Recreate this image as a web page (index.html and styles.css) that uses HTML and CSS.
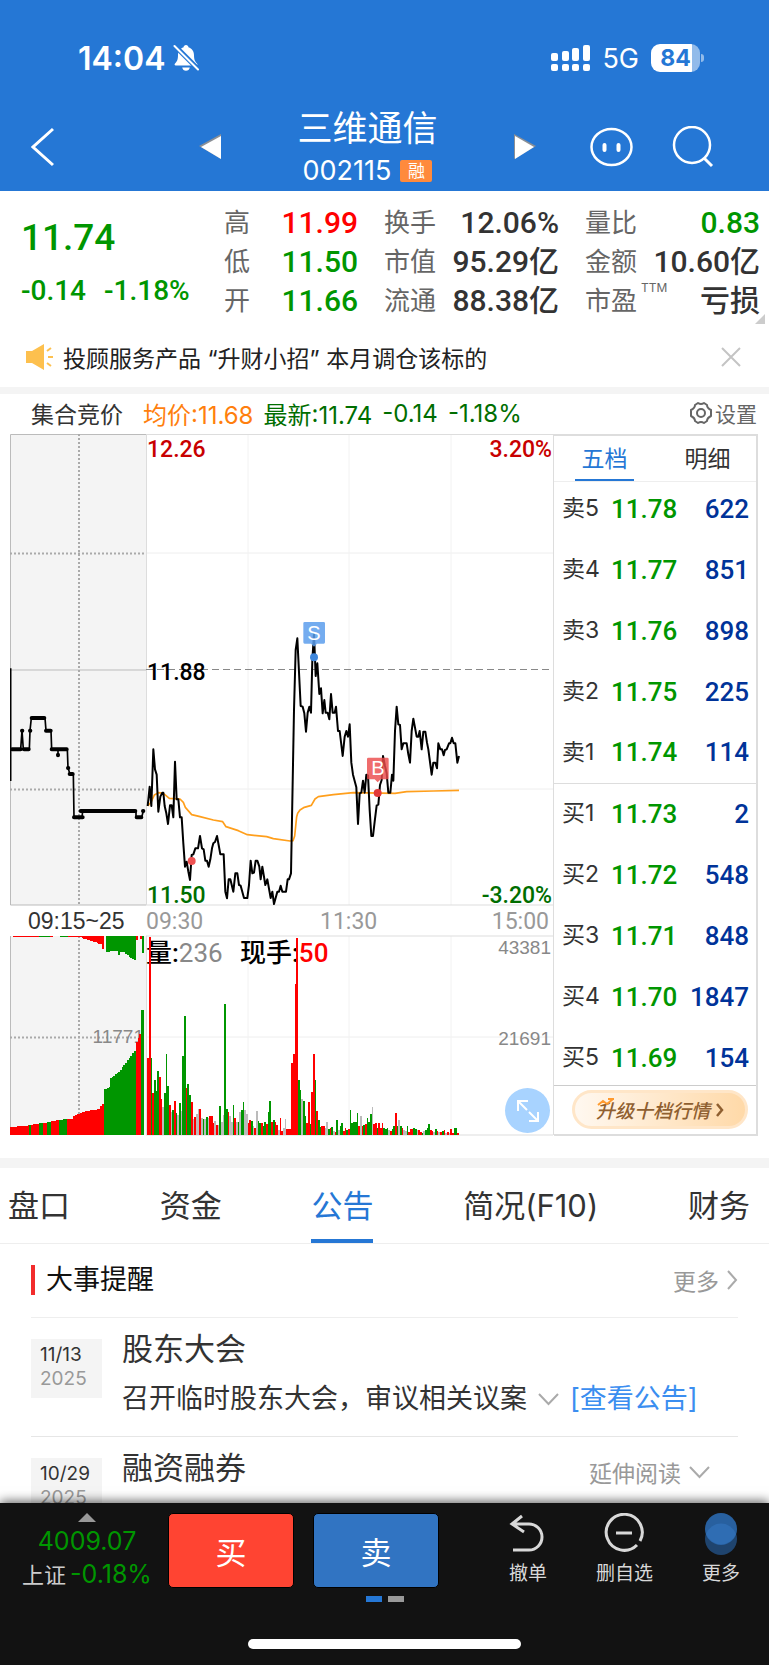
FILE: index.html
```html
<!DOCTYPE html>
<html lang="zh-CN">
<head>
    <meta charset="UTF-8">
    <meta name="viewport" content="width=device-width, initial-scale=1.0">
    <title>三维通信 002115</title>
    <link rel="stylesheet" href="styles.css">
</head>
<body>
<div class="app">

    <header class="header">
        <!-- Status bar -->
        <div class="status">
            <span class="status-time">14:04</span>
            <svg class="bell" width="26" height="28" viewBox="0 0 26 28">
                <path fill="#fff" d="M13 1c1.400 0 2.400 1 2.400 2.200 3.600 1 5.600 4.200 5.600 8 0 5 1.500 6.800 3 8.300.8.800.5 2-.8 2H2.800c-1.300 0-1.600-1.200-.8-2 1.500-1.500 3-3.300 3-8.300 0-3.800 2-7 5.600-8C10.600 2 11.600 1 13 1zM9.200 23.500h7.600c-.3 2-1.900 3.300-3.800 3.300s-3.500-1.300-3.800-3.300z"/>
                <path stroke="#2577d5" stroke-width="5" d="M1 1l25 25"/>
                <path stroke="#fff" stroke-width="2" stroke-linecap="round" d="M1.500 2l23.500 23.500"/>
            </svg>
            <svg class="signal" width="39" height="28" viewBox="0 0 39 28" fill="#fff">
                <rect x="0" y="9" width="7" height="8" rx="2"/>
                <rect x="11" y="7" width="7" height="10" rx="2"/>
                <rect x="21" y="4" width="7" height="13" rx="2"/>
                <rect x="32" y="1" width="7" height="16" rx="2"/>
                <rect x="0" y="20" width="7" height="7" rx="2"/>
                <rect x="11" y="20" width="7" height="7" rx="2"/>
                <rect x="21" y="20" width="7" height="7" rx="2"/>
                <rect x="32" y="20" width="7" height="7" rx="2"/>
            </svg>
            <span class="status-net">5G</span>
            <span class="battery">84</span>
        </div>

        <!-- Navigation -->
        <nav class="nav">
            <button class="icon-btn" aria-label="返回">
                <svg width="24" height="40" viewBox="0 0 24 40" fill="none" stroke="#fff" stroke-width="3"><path d="M22 2L2 20l20 18"/></svg>
            </button>
            <div class="switcher">
                <button class="icon-btn" aria-label="上一只">
                    <svg width="22" height="26" viewBox="0 0 22 26"><path fill="#8a8f96" d="M0 12L22 0v25z"/><path fill="#fff" d="M2 13L22 2v23z"/></svg>
                </button>
                <div class="stock">
                    <h1 class="stock-name">三维通信</h1>
                    <div class="stock-code">002115 <span class="badge">融</span></div>
                </div>
                <button class="icon-btn" aria-label="下一只">
                    <svg width="22" height="26" viewBox="0 0 22 26"><path fill="#8a8f96" d="M22 12L0 0v25z"/><path fill="#fff" d="M20 13L1 2v23z"/></svg>
                </button>
            </div>
            <div class="nav-tools">
                <button class="icon-btn" aria-label="助手">
                    <svg width="43" height="40" viewBox="0 0 43 40" fill="none" stroke="#fff"><ellipse cx="21.500" cy="20" rx="20" ry="18" stroke-width="2.500"/><path stroke-width="4" stroke-linecap="round" d="M14.500 18v5M28.500 18v5"/></svg>
                </button>
                <button class="icon-btn" aria-label="搜索">
                    <svg width="42" height="42" viewBox="0 0 42 42" fill="none" stroke="#fff" stroke-width="2.500"><circle cx="20" cy="19" r="18"/><path stroke-width="3" d="M32 32l8 8"/></svg>
                </button>
            </div>
        </nav>
    </header>

    <main class="main">
        <!-- Quote summary -->
        <section class="quote">
            <div class="quote-main">
                <div class="price down">11.74</div>
                <div class="change down"><span>-0.14</span><span>-1.18%</span></div>
            </div>
            <dl class="stats">
                <div><dt>高</dt><dd class="up">11.99</dd></div>
                <div><dt>低</dt><dd class="down">11.50</dd></div>
                <div><dt>开</dt><dd class="down">11.66</dd></div>
            </dl>
            <dl class="stats">
                <div><dt>换手</dt><dd>12.06%</dd></div>
                <div><dt>市值</dt><dd>95.29亿</dd></div>
                <div><dt>流通</dt><dd>88.38亿</dd></div>
            </dl>
            <dl class="stats">
                <div><dt>量比</dt><dd class="down">0.83</dd></div>
                <div><dt>金额</dt><dd>10.60亿</dd></div>
                <div><dt>市盈<sup>TTM</sup></dt><dd>亏损</dd></div>
            </dl>
        </section>

        <div class="notice">
            <svg width="28" height="26" viewBox="0 0 28 26">
                <path fill="#fdc04e" d="M1 7h6l12-7v26L7 19H1z"/>
                <path stroke="#fdc04e" stroke-width="2" d="M22 7l4-3M23 13h5M22 19l4 3"/>
            </svg>
            <p>投顾服务产品 “升财小招” 本月调仓该标的</p>
            <button class="icon-btn" aria-label="关闭">
                <svg width="20" height="20" viewBox="0 0 20 20" stroke="#c4c4c4" stroke-width="2"><path d="M1 1l18 18M19 1L1 19"/></svg>
            </button>
        </div>

        <!-- Intraday chart -->
        <section class="trend">
            <div class="trend-bar">
                <span class="trend-mode">集合竞价</span>
                <span class="avg">均价:11.68</span>
                <span class="last">最新:11.74</span>
                <span class="last">-0.14</span>
                <span class="last">-1.18%</span>
                <button class="settings">
                    <svg width="24" height="24" viewBox="0 0 24 24" fill="none" stroke="#666" stroke-width="2"><path stroke-linejoin="round" d="M9 2q3 2 6 0l3 2q0 3 4 5v6q-4 2-4 5l-3 2q-3-2-6 0l-3-2q0-3-4-5V9q4-2 4-5z"/><circle cx="12" cy="12" r="4"/></svg>
                    设置
                </button>
            </div>

            <div class="trend-body">
                <div class="chart">
                    <svg viewBox="0 0 544 702" class="chart-svg">
                        <!-- panels and grid -->
                        <rect x="1" y="0" width="135" height="471" fill="#f4f4f4"/>
                        <rect x="1" y="502" width="135" height="199" fill="#f4f4f4"/>
                        <g fill="none" stroke="#eee">
                            <path d="M136 119H543M136 355H543M136 603H543"/>
                            <path stroke="#f2f2f2" d="M238 0V471M339 0V471M441 0V471M238 502V701M339 502V701M441 502V701"/>
                        </g>
                        <path fill="none" stroke="#ddd" d="M136 0.500H543M136 471H543M136 502H543M136 701H543M136.500 0V471M136.500 502V701M543.500 0V701"/>
                        <path fill="none" stroke="#bbb" d="M136 0.500H0.500V471H136M0.500 502V701M0 236H136"/>
                        <path fill="none" stroke="#aaa" stroke-width="2" stroke-dasharray="2 2" d="M69 0V471M69 502V701M0 119.500H136M0 355.500H136M0 603.500H136"/>
                        <path fill="none" stroke="#888" stroke-dasharray="7 4" d="M136 235.500H543"/>

                        <!-- axis text -->
                        <g class="axis">
                            <text x="137" y="23" fill="#c80000">12.26</text>
                            <text x="542" y="23" fill="#c80000" text-anchor="end">3.20%</text>
                            <text x="137" y="246" fill="#000">11.88</text>
                            <text x="137" y="469" fill="#006e00">11.50</text>
                            <text x="542" y="469" fill="#006e00" text-anchor="end">-3.20%</text>
                            <g class="axis-time">
                                <text x="136" y="495">09:30</text>
                                <text x="310" y="495">11:30</text>
                                <text x="539" y="495" text-anchor="end">15:00</text>
                            </g>
                        </g>
                        <text class="auction-time" x="18" y="495">09:15~25</text>
                        <g class="axis-vol">
                            <text x="541" y="520" text-anchor="end">43381</text>
                            <text x="541" y="611" text-anchor="end">21691</text>
                            <text x="134" y="609" text-anchor="end">11771</text>
                        </g>
                        <text class="vol-text" x="136" y="528">量:<tspan fill="#888" font-weight="400">236</tspan></text>
                        <text class="vol-text" x="230" y="528">现手:<tspan fill="#f00">50</tspan></text>

                        <!-- price lines -->
                        <svg x="0" y="0" width="544" height="472" viewBox="30 42 1632 1416" fill="none" stroke-linejoin="round">
                            <path stroke="#000" stroke-width="5" d="M32 745V1083M34 988H62L66 932 70 988H88L90 932 94 894H135L138 932H153L155 988H174V1006V988H202L204 1044 210 1062H220L222 1192H246L248 1173H408V1192H425L430 1173"/>
                            <path stroke="#000" stroke-width="12" stroke-linecap="round" d="M36 988H62M72 988H86M66 932h1M90 932h1M95 894H133M138 932H152M155 988H200M174 1004v2M204 1044h1M209 1062H218M222 1192H248M242 1173H406M410 1192H424M429 1173h1"/>
                            <path stroke="#ff9f1c" stroke-width="5" d="M443 1158L454 1145 463 1125 475 1118 490 1120 508 1135 540 1137 550 1147 556 1162 575 1184 600 1190 640 1200 668 1205 678 1220 715 1232 742 1244 800 1250 820 1256 870 1263 879 1262 884 1248 890 1190 893 1180 900 1170 913 1162 934 1156 945 1137 955 1130 1000 1124 1060 1118 1185 1120 1220 1115 1300 1113 1377 1111"/>
                            <path stroke="#000" stroke-width="6" d="M443 1158L449 1100 454 1158 460 988 465 1048 470 1064 475 1175 481 1130 487 1118 490 1118 494 1158 499 1180 504 1212 510 1156 515 1156 520 1192 525 1025 530 1138 535 1138 540 1192 545 1192 550 1270 555 1340 560 1325 565 1355 570 1380 575 1305 580 1303 586 1285 594 1285 600 1248 606 1285 611 1288 616 1322 621 1322 626 1340 631 1318 636 1285 640 1270 645 1266 651 1248 656 1275 661 1303 671 1303 676 1415 681 1435 686 1378 691 1378 700 1415 706 1360 712 1360 717 1395 722 1397 732 1434 742 1434 747 1395 752 1322 757 1360 762 1358 767 1322 772 1322 778 1340 782 1378 787 1340 796 1395 802 1378 812 1434 817 1415 822 1452 832 1415 837 1415 842 1397 847 1415 858 1415 863 1378 867 1378 873 1360 882 870 887 690 892 655 902 858 908 860 913 880 918 935 923 878 928 860 933 878 937 720 942 640 947 768 952 730 958 822 963 805 968 880 973 840 977 878 983 878 988 898 993 822 998 878 1004 878 1008 860 1014 933 1019 933 1028 1008 1034 950 1039 933 1044 950 1049 913 1054 1028 1059 1064 1069 1102 1074 1212 1079 1120 1084 1118 1089 1082 1094 1118 1099 1064 1104 1066 1109 1170 1114 1248 1119 1248 1124 1205 1130 1156 1135 1154 1140 1095 1145 1080 1149 1008 1155 1038 1160 1060 1165 1118 1171 1118 1176 1064 1180 1082 1185 933 1190 860 1195 913 1200 915 1205 988 1210 970 1220 970 1225 1003 1230 1028 1235 933 1240 896 1250 950 1255 950 1259 933 1265 988 1270 935 1276 935 1281 968 1285 988 1295 1064 1300 1028 1306 1028 1311 1045 1315 970 1321 988 1326 988 1331 1006 1335 990 1340 988 1347 970 1351 970 1356 953 1361 970 1366 970 1372 1028 1377 1008"/>
                            <circle cx="575" cy="1323" r="12" fill="#ee5252"/>
                            <circle cx="942" cy="712" r="12" fill="#3f87dc"/>
                            <circle cx="1133" cy="1119" r="12" fill="#e23a3a"/>
                            <path fill="#5c9eec" fill-opacity=".85" d="M914 606h57q4 0 4 4v57q0 4-4 4h-20l-9 9-9-9h-19q-4 0-4-4v-57q0-4 4-4z"/>
                            <path fill="#eb4c4c" fill-opacity=".82" d="M1105 1013h57q4 0 4 4v57q0 4-4 4h-20l-9 9-9-9h-19q-4 0-4-4v-57q0-4 4-4z"/>
                        </svg>
                        <text class="mark" x="304" y="206">S</text>
                        <text class="mark" x="368" y="341">B</text>

                        <!-- volume bars, filled in by script.js -->
                        <svg x="0" y="501" width="544" height="200" viewBox="30 105 1632 600" shape-rendering="crispEdges">
                            <g id="auctionBars"></g>
                            <g id="volumeBars"></g>
                        </svg>
                    </svg>
                    <button class="expand" aria-label="全屏">
                        <svg width="24" height="24" viewBox="0 0 24 24" fill="none" stroke="#fff" stroke-width="2"><path d="M2 12V2h10M2 2l9 9M22 13v9h-9M22 22l-9-9"/></svg>
                    </button>
                </div>

                <!-- Order book -->
                <aside class="book">
                    <div class="book-tabs">
                        <button class="active">五档</button>
                        <button>明细</button>
                    </div>
                    <table class="levels">
                        <tbody>
                            <tr><th>卖5</th><td>11.78</td><td>622</td></tr>
                            <tr><th>卖4</th><td>11.77</td><td>851</td></tr>
                            <tr><th>卖3</th><td>11.76</td><td>898</td></tr>
                            <tr><th>卖2</th><td>11.75</td><td>225</td></tr>
                            <tr><th>卖1</th><td>11.74</td><td>114</td></tr>
                        </tbody>
                        <tbody class="bids">
                            <tr><th>买1</th><td>11.73</td><td>2</td></tr>
                            <tr><th>买2</th><td>11.72</td><td>548</td></tr>
                            <tr><th>买3</th><td>11.71</td><td>848</td></tr>
                            <tr><th>买4</th><td>11.70</td><td>1847</td></tr>
                            <tr><th>买5</th><td>11.69</td><td>154</td></tr>
                        </tbody>
                    </table>
                    <div class="upgrade-wrap">
                        <button class="upgrade">
                            <svg class="spark" width="18" height="8" viewBox="0 0 18 8" fill="none" stroke="#ff9a2e" stroke-width="2"><path d="M1 7l5-4 4 3 6-5M11 1h6"/></svg>
                            <span>升级十档行情</span>
                            <svg width="8" height="14" viewBox="0 0 8 14" fill="none" stroke="#8f5f30" stroke-width="2.500"><path d="M1 1l5 6-5 6"/></svg>
                        </button>
                    </div>
                </aside>
            </div>
        </section>

        <!-- Info tabs -->
        <div class="tabs">
            <button>盘口</button>
            <button>资金</button>
            <button class="active">公告</button>
            <button>简况(F10)</button>
            <button>财务</button>
        </div>

        <section class="events">
            <div class="events-head">
                <h2>大事提醒</h2>
                <a href="#" class="more">更多
                    <svg width="11" height="20" viewBox="0 0 11 20" fill="none" stroke="#aaa" stroke-width="2"><path d="M1 1l8 9-8 9"/></svg>
                </a>
            </div>
            <article class="event">
                <time class="date">11/13<span>2025</span></time>
                <div class="event-body">
                    <h3>股东大会</h3>
                    <p>召开临时股东大会，审议相关议案
                        <svg width="21" height="13" viewBox="0 0 21 13" fill="none" stroke="#aaa" stroke-width="2"><path d="M1 1l9.500 10L20 1"/></svg>
                        <a href="#">[查看公告]</a>
                    </p>
                </div>
            </article>
            <article class="event">
                <time class="date">10/29<span>2025</span></time>
                <div class="event-body">
                    <h3>融资融券</h3>
                </div>
                <a href="#" class="more read">延伸阅读
                    <svg width="21" height="13" viewBox="0 0 21 13" fill="none" stroke="#aaa" stroke-width="2"><path d="M1 1l9.500 10L20 1"/></svg>
                </a>
            </article>
        </section>
    </main>

    <!-- Trade bar -->
    <footer class="footer">
        <div class="footer-row">
            <div class="index">
                <svg width="18" height="9" viewBox="0 0 18 9"><path fill="#999" d="M9 0l9 9H0z"/></svg>
                <div class="index-value">4009.07</div>
                <div class="index-change"><span>上证</span>-0.18%</div>
            </div>
            <button class="trade buy">买</button>
            <button class="trade sell">卖</button>
            <div class="actions">
                <button>
                    <svg width="40" height="40" viewBox="0 0 40 40" fill="none" stroke="#d8d8d8" stroke-width="3"><path d="M14 3L4 11l12 8M5 11h16a13 13 0 0 1 0 26H5"/></svg>
                    撤单
                </button>
                <button>
                    <svg width="40" height="40" viewBox="0 0 40 40" fill="none" stroke="#d8d8d8" stroke-width="3"><path d="M33 32A18 18 0 1 1 36 28M12 20h16"/></svg>
                    删自选
                </button>
                <button>
                    <svg width="40" height="42" viewBox="0 0 40 42"><circle cx="20" cy="26" r="16" fill="#1f446e"/><circle cx="20" cy="16" r="16" fill="#28609f"/><path fill="#2f6db3" d="M5 21a16 16 0 0 1 30 0 16 16 0 0 1-30 0z"/></svg>
                    更多
                </button>
            </div>
        </div>
        <div class="pager"><i class="on"></i><i></i></div>
        <div class="home-bar"></div>
    </footer>
</div>
<script src="script.js"></script>
</body>
</html>
```

FILE: styles.css
```css
* {
    margin: 0;
    padding: 0;
    box-sizing: border-box;
}

body {
    font-family: Inter, 'Noto Sans CJK SC', sans-serif;
    background: #fff;
    color: #333;
}

button {
    font: inherit;
    color: inherit;
    background: none;
    border: none;
    cursor: pointer;
}

a {
    text-decoration: none;
}

svg {
    display: block;
    flex: none;
}

.app {
    display: flex;
    flex-direction: column;
    height: 100vh;
}

.up {
    color: #f00;
}

.down {
    color: #009600;
}

.icon-btn {
    display: flex;
}

/* Header */
.header {
    background: #2577d5;
    color: #fff;
}

.status {
    display: flex;
    align-items: center;
    height: 103px;
    padding: 13px 69px 0 78px;
}

.status-time {
    font-size: 32px;
    font-weight: 600;
}

.bell {
    margin-left: 8px;
}

.signal {
    margin-left: auto;
}

.status-net {
    font-size: 27px;
    margin: 0 12px;
}

.battery {
    position: relative;
    width: 49px;
    height: 28px;
    border-radius: 9px;
    background: linear-gradient(90deg, #fff 84%, #92bbea 84%);
    color: #2577d5;
    font-size: 23px;
    font-weight: 700;
    line-height: 28px;
    text-align: center;
}

.battery::after {
    content: "";
    position: absolute;
    right: -4px;
    top: 10px;
    width: 3px;
    height: 8px;
    border-radius: 0 3px 3px 0;
    background: #92bbea;
}

.nav {
    display: flex;
    align-items: center;
    height: 88px;
    padding: 0 55px 0 31px;
}

.switcher {
    display: flex;
    align-items: center;
    justify-content: space-between;
    width: 337px;
    margin: 0 54px 0 auto;
}

.stock {
    text-align: center;
}

.stock-name {
    font-size: 35px;
    font-weight: 400;
    line-height: 48px;
}

.stock-code {
    display: flex;
    align-items: center;
    justify-content: center;
    gap: 9px;
    font-size: 27px;
    line-height: 38px;
}

.badge {
    width: 32px;
    border-radius: 2px;
    background: #ff8a3c;
    font-size: 17px;
    line-height: 22px;
}

.nav-tools {
    display: flex;
    align-items: center;
    gap: 39px;
}

/* Content */
.main {
    flex: 1;
    min-height: 0;
    overflow: hidden;
}

.quote {
    position: relative;
    display: grid;
    grid-template-columns: 177fr 134fr 175fr 175fr;
    gap: 26px;
    padding: 12px 9px 7px 21px;
}

.quote::after {
    content: "";
    position: absolute;
    right: 4px;
    bottom: 3px;
    border: 5px solid #ccc;
    border-top-color: transparent;
    border-left-color: transparent;
}

.price,
.change,
.stats dd {
    font-family: Roboto, 'Noto Sans CJK SC', sans-serif;
    font-weight: 500;
    white-space: nowrap;
}

.price {
    font-size: 37px;
    line-height: 70px;
}

.change {
    display: flex;
    gap: 18px;
    font-size: 28px;
    line-height: 36px;
}

.stats div {
    display: flex;
    justify-content: space-between;
    height: 39px;
    line-height: 39px;
}

.stats dt {
    position: relative;
    color: #666;
    font-size: 26px;
}

.stats dd {
    font-size: 30px;
}

.stats sup {
    position: absolute;
    left: 56px;
    top: -6px;
    font-size: 12px;
    line-height: 26px;
}

.notice {
    display: flex;
    align-items: center;
    gap: 10px;
    height: 60px;
    padding: 0 28px 0 25px;
    font-size: 23px;
    color: #222;
}

.notice p {
    flex: 1;
}

/* Intraday chart */
.trend {
    padding: 0 11px 22px 10px;
    border-top: 7px solid #f4f4f4;
}

.trend-bar {
    display: flex;
    align-items: center;
    gap: 10px;
    height: 40px;
    padding: 0 1px 2px 21px;
    font-size: 24px;
    white-space: nowrap;
}

.trend-mode {
    margin-right: 10px;
    font-size: 23px;
}

.avg {
    color: #ff7f0e;
}

.last {
    color: #006e00;
}

.settings {
    display: flex;
    align-items: center;
    gap: 2px;
    margin-left: auto;
    color: #666;
    font-size: 21px;
}

.trend-body {
    display: flex;
}

.chart {
    position: relative;
    flex: 1;
    min-width: 0;
}

.chart-svg {
    width: 100%;
    height: auto;
}

.axis {
    font-family: Roboto, sans-serif;
    font-size: 23px;
    font-weight: 500;
}

.axis-time {
    font-weight: 400;
    fill: #999;
}

.auction-time {
    font-family: 'Liberation Sans', sans-serif;
    font-size: 23px;
    fill: #333;
}

.axis-vol {
    font-family: 'Liberation Sans', sans-serif;
    font-size: 19px;
    fill: #888;
}

.vol-text {
    font-family: Roboto, 'Noto Sans CJK SC', sans-serif;
    font-size: 26px;
    font-weight: 500;
    fill: #000;
}

.mark {
    font-family: 'Liberation Sans', sans-serif;
    font-size: 20px;
    fill: #fff;
    text-anchor: middle;
}

.expand {
    position: absolute;
    right: 4px;
    bottom: 3px;
    display: flex;
    align-items: center;
    justify-content: center;
    width: 45px;
    height: 45px;
    border-radius: 50%;
    background: #a8d3ff;
}

/* Order book */
.book {
    width: 204px;
    border: 2px solid #ddd;
    border-left: none;
}

.book-tabs {
    display: flex;
    padding: 0 19px 0 21px;
    justify-content: space-between;
    height: 46px;
    border-bottom: 1px solid #eee;
    font-size: 23px;
    line-height: 46px;
}

.book-tabs button {
    width: 59px;
}

.book-tabs .active {
    color: #2577d5;
    border-bottom: 2px solid #2577d5;
}

.levels {
    width: 100%;
    margin: -4px 0 -3px;
    border-collapse: collapse;
}

.levels th {
    width: 57px;
    height: 61px;
    padding: 0 0 5px 8px;
    font-size: 23px;
    font-weight: 400;
    text-align: left;
}

.levels td {
    font-family: Roboto, sans-serif;
    font-size: 26px;
    font-weight: 500;
    color: #009600;
}

.levels td:last-child {
    padding-right: 7px;
    color: #003399;
    text-align: right;
}

.bids {
    border-top: 1px solid #ddd;
}

.upgrade-wrap {
    padding: 4px 8px 3px 18px;
    border-top: 1px solid #ccc;
}

.upgrade {
    position: relative;
    display: flex;
    align-items: center;
    justify-content: center;
    gap: 6px;
    width: 100%;
    height: 39px;
    border: 3px solid #ffe6c8;
    border-radius: 20px;
    background: linear-gradient(90deg, #fff8f0, #ffd9a8);
    color: #8f5f30;
    font-size: 19px;
    font-weight: 500;
    font-style: italic;
}

.spark {
    position: absolute;
    left: 22px;
    top: 5px;
}

/* Tabs */
.tabs {
    display: flex;
    justify-content: space-between;
    height: 86px;
    padding: 0 19px 0 8px;
    border-top: 10px solid #f4f4f4;
    border-bottom: 1px solid #eee;
    font-size: 31px;
}

.tabs button {
    border-bottom: 4px solid transparent;
}

.tabs .active {
    color: #2577d5;
    border-color: #2577d5;
}

/* Events */
.events {
    padding: 0 31px;
}

.events-head {
    display: flex;
    align-items: center;
    justify-content: space-between;
    height: 74px;
    padding-bottom: 2px;
    border-bottom: 1px solid #eee;
}

.events-head h2 {
    padding-left: 11px;
    border-left: 4px solid #f22c2c;
    font-size: 27px;
    font-weight: 400;
    line-height: 30px;
    color: #111;
}

.more {
    display: flex;
    align-items: center;
    gap: 8px;
    font-size: 23px;
    color: #999;
}

.event {
    display: flex;
    gap: 20px;
    height: 119px;
    border-bottom: 1px solid #e6e6e6;
}

.date {
    width: 71px;
    height: 59px;
    margin-top: 21px;
    padding: 4px 0 0 9px;
    background: #f4f4f4;
    font-size: 19px;
    line-height: 24px;
}

.date span {
    display: block;
    color: #999;
}

.event-body {
    flex: 1;
}

.event-body h3 {
    margin-top: 8px;
    font-size: 31px;
    font-weight: 400;
    line-height: 46px;
}

.event-body p {
    display: flex;
    align-items: center;
    gap: 11px;
    font-size: 27px;
    line-height: 54px;
    white-space: nowrap;
}

.event-body a {
    color: #3b8ef0;
}

.read {
    align-self: flex-start;
    margin: 18px 28px 0 0;
}

/* Trade bar */
.footer {
    position: relative;
    height: 162px;
    padding-top: 10px;
    background: #121212;
    box-shadow: 0 -2px 10px rgba(0, 0, 0, 0.6);
}

.footer-row {
    display: flex;
    height: 75px;
}

.index {
    display: flex;
    flex-direction: column;
    align-items: center;
    width: 134px;
    margin: 0 14px 0 20px;
    font-size: 25px;
    color: #009600;
    white-space: nowrap;
}

.index-value {
    line-height: 38px;
}

.index-change {
    line-height: 28px;
}

.index-change span {
    margin-right: 4px;
    font-size: 22px;
    color: #ccc;
}

.trade {
    width: 126px;
    border: 1px solid #000;
    border-radius: 5px;
    color: #fff;
    font-size: 31px;
}

.trade + .trade {
    margin-left: 19px;
}

.buy {
    background: #ff4432;
}

.sell {
    background: #3174c2;
}

.actions {
    display: flex;
    flex: 1;
    justify-content: space-between;
    margin-left: 69px;
    padding-right: 28px;
    color: #d8d8d8;
    font-size: 19px;
    line-height: 28px;
}

.actions button {
    display: flex;
    flex-direction: column;
    align-items: center;
    justify-content: space-between;
    white-space: nowrap;
}

.pager {
    display: flex;
    justify-content: center;
    gap: 6px;
    margin-top: 8px;
}

.pager i {
    width: 16px;
    height: 6px;
    background: #999;
}

.pager .on {
    background: #2577d5;
}

.home-bar {
    width: 273px;
    height: 10px;
    margin: 37px auto 0;
    border-radius: 5px;
    background: #fff;
}
```

FILE: script.js
```javascript
const colors = { r: '#ff0000', g: '#009600', n: '#bbbbbb' };
const BASE = 705;
const TOP = 107;

// one entry per minute: r = rise, g = fall, n = flat
const volumes = `r230 r593 g231 r126 g165 g132 g192 r175 r108 n83 g126 g243 g147 r90 n68 g75 r102 g65 n60 g95
n72 g237 g357 r140 g153 g120 r98 n47 r53 n62 n78 r79 n52 g47 n47 g53 n50 r57 r57 r35
n43 r30 n30 g88 n40 n60 g393 g77 r68 n56 n40 g90 r50 n38 g40 n68 g75 g100 n75 n62
r36 r45 g42 n28 r20 n72 g42 g36 r36 g27 g40 r32 g70 g102 r38 g44 r38 r30 n15 r50
r12 n22 n48 r17 r17 r17 r215 r243 r452 r591 g164 g135 n107 g101 g57 r36 r100 g33 r128 r243
g165 r72 g45 g25 r27 r26 n22 n40 g18 r20 g23 n12 r8 g45 n15 g28 g35 r12 r22 g15
r17 g75 g36 g40 g38 g65 r26 n58 r26 g30 r33 g50 g38 g62 n83 r32 r35 g22 r37 r22
r35 g20 g18 g22 n15 r12 g18 g28 r65 g28 n44 g28 r22 n15 n13 g26 r10 r17 r18 g20
g18 n14 r14 r8 g5 n12 g15 g20 g32 r14 r13 n10 g18 r13 n8 r10 g12 r14 n6 r10
n5 r18 r6 g20 g22 r5`.split(/\s+/);

// opening auction: [x from, x to, height from, height to, colour]
const matched = [
    [31, 88, 24, 29, 'r'], [88, 94, 30, 30, 'g'], [94, 118, 31, 34, 'r'], [118, 130, 37, 37, 'g'],
    [130, 141, 37, 37, 'r'], [141, 153, 39, 40, 'g'], [153, 178, 42, 45, 'r'], [178, 202, 46, 48, 'g'],
    [202, 220, 48, 48, 'r'], [220, 255, 58, 70, 'r'], [255, 295, 71, 77, 'r'], [295, 312, 79, 93, 'r'],
    [312, 330, 137, 143, 'g'], [330, 360, 172, 188, 'g'], [360, 407, 196, 252, 'g'],
    [407, 424, 278, 302, 'r'], [424, 431, 374, 374, 'g']
];
const unmatched = [
    [40, 118, 3, 4, 'r'], [118, 150, 3, 3, 'g'], [150, 160, 5, 5, 'r'], [160, 205, 2, 3, 'g'],
    [205, 245, 3, 5, 'r'], [245, 295, 8, 22, 'r'], [295, 306, 24, 25, 'r'], [306, 311, 40, 40, 'r'],
    [317, 330, 50, 48, 'g'], [330, 353, 46, 46, 'g'], [353, 360, 58, 58, 'g'], [360, 375, 50, 50, 'g'],
    [375, 407, 56, 73, 'g'], [407, 413, 12, 12, 'r'], [420, 425, 10, 10, 'r'], [425, 431, 53, 53, 'g']
];

function addBar(parent, x, y, width, height, color) {
    const rect = document.createElementNS('http://www.w3.org/2000/svg', 'rect');
    rect.setAttribute('x', x);
    rect.setAttribute('y', y);
    rect.setAttribute('width', width);
    rect.setAttribute('height', height);
    rect.setAttribute('fill', colors[color]);
    parent.appendChild(rect);
}

function drawAuction(parent, segments, fromTop) {
    segments.forEach(([x1, x2, h1, h2, color]) => {
        const count = Math.max(1, Math.round((x2 - x1) / 5));
        const step = (x2 - x1) / count;
        for (let i = 0; i < count; i++) {
            const height = h1 + (h2 - h1) * (count > 1 ? i / (count - 1) : 0);
            addBar(parent, x1 + i * step, fromTop ? TOP : BASE - height, step, height, color);
        }
    });
}

const auctionBars = document.getElementById('auctionBars');
const volumeBars = document.getElementById('volumeBars');

drawAuction(auctionBars, matched, false);
drawAuction(auctionBars, unmatched, true);

volumes.forEach((item, i) => {
    const height = Number(item.slice(1));
    addBar(volumeBars, 442 + i * 5.02, BASE - height, 5.02, height, item[0]);
});
```
